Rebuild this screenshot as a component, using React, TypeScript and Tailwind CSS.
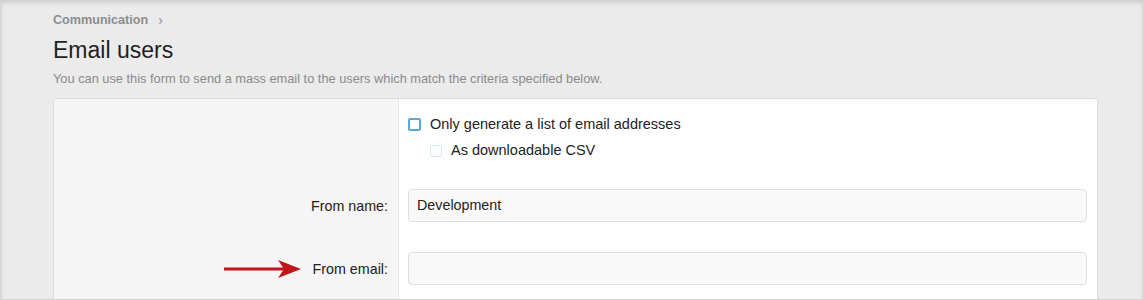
import React from 'react'

function Arrow() {
  return (
    <svg width="78" height="20" viewBox="0 0 78 20" className="absolute -left-[89px] top-1/2 -translate-y-1/2">
      <line x1="0" y1="10" x2="62" y2="10" stroke="#c0161b" strokeWidth="3" />
      <path d="M54 1 L77 10 L54 19 L60 10 Z" fill="#c0161b" />
    </svg>
  )
}

export default function App() {
  return (
    <div className="w-[1144px] h-[300px] overflow-hidden bg-[#ebebeb] border-x border-b border-[#d4d4d4] shadow-[inset_0_3px_4px_rgba(0,0,0,0.12)] font-['Liberation_Sans',Arial,sans-serif]">
      <div className="pl-[52px] pr-[45px] pt-[11px]">
        <div className="flex items-center gap-[10px] text-[12.6px] font-bold text-[#8d8d8d]">
          <span>Communication</span>
          <span className="text-[14px] font-normal leading-none">›</span>
        </div>
        <h1 className="mt-[6px] text-[23px] leading-[28px] text-[#1f1f1f]">Email users</h1>
        <p className="mt-[8px] text-[12.8px] leading-[14px] text-[#8a8a8a]">
          You can use this form to send a mass email to the users which match the criteria specified below.
        </p>
        <div className="mt-[12px] h-[240px] rounded-[3px] border border-[#dcdcdc] bg-white flex overflow-hidden">
          <div className="w-[345px] bg-[#f5f5f5] border-r border-[#e6e6e6] flex flex-col items-end pr-[10px]">
            <div className="h-[91px]" />
            <div className="h-[33px] flex items-center text-[14.3px] text-[#222]">From name:</div>
            <div className="h-[30px]" />
            <div className="relative h-[33px] flex items-center text-[14.3px] text-[#222]">
              <Arrow />
              From email:
            </div>
          </div>
          <div className="flex-1 pl-[9px] pr-[10px] pt-[19px]">
            <label className="flex items-center gap-[9px] h-[14px] text-[14.5px] text-[#222]">
              <span className="w-[13px] h-[13px] rounded-[2px] border-2 border-[#5aa9dd] bg-white" />
              Only generate a list of email addresses
            </label>
            <label className="mt-[12px] ml-[22px] flex items-center gap-[9px] h-[14px] text-[14.5px] text-[#222]">
              <span className="w-[12px] h-[12px] rounded-[2px] border border-[#d6e6f2] bg-white" />
              As downloadable CSV
            </label>
            <div className="mt-[31px] h-[33px] rounded-[4px] border border-[#dfdfdf] bg-[#f9f9f9] flex items-center px-[8px] text-[14.3px] text-[#222]">
              Development
            </div>
            <div className="mt-[30px] h-[33px] rounded-[4px] border border-[#dfdfdf] bg-[#f9f9f9]" />
          </div>
        </div>
      </div>
    </div>
  )
}
